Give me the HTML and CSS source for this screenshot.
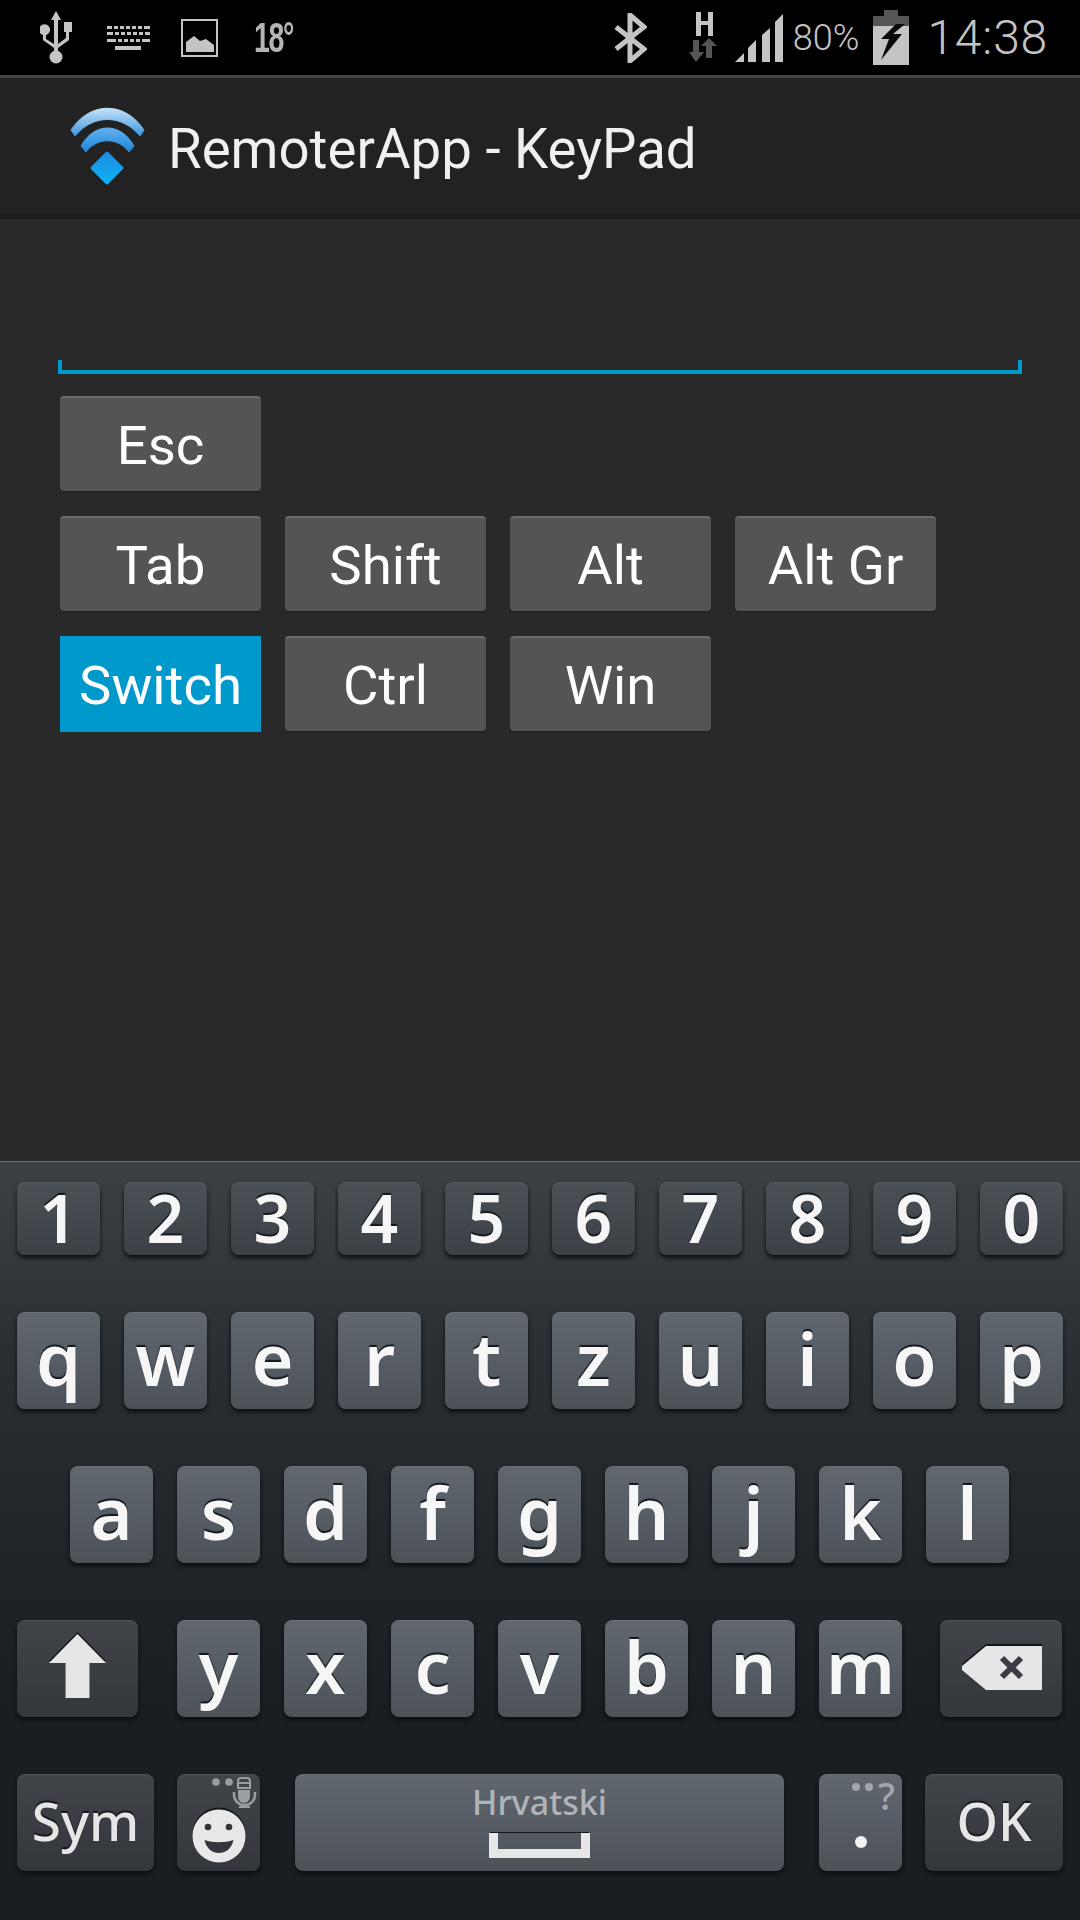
FILE: index.html
```html
<!DOCTYPE html>
<html lang="hr">
<head>
<meta charset="utf-8">
<title>RemoterApp - KeyPad</title>
<link rel="stylesheet" href="styles.css">
</head>
<body>
<div class="screen">
  <header class="status">
    <div class="status-left">
      <svg class="i-usb" viewBox="0 0 32 54"><path d="M16 0l5 9h-3v24l8-6v-6h-2V11h8v10h-3v8l-11 8v7h-4v-7L3 29v-5a5.5 5.5 0 1 1 3 0v4l8 5V9h-3z" fill="#c4c4c4"/><circle cx="16" cy="46" r="6.5" fill="#c4c4c4"/></svg>
      <svg class="i-kbd" viewBox="0 0 43 24" fill="#c4c4c4"><path d="M0 0h5v3H0zM7 0h4v3H7zM13 0h4v3h-4zM19 0h4v3h-4zM25 0h4v3h-4zM31 0h4v3h-4zM37 0h6v3h-6zM0 6h6v3H0zM8 6h4v3H8zM14 6h4v3h-4zM20 6h4v3h-4zM26 6h4v3h-4zM32 6h4v3h-4zM38 6h5v3h-5zM0 13h9v3H0zM11 13h4v3h-4zM17 13h4v3h-4zM23 13h4v3h-4zM29 13h4v3h-4zM35 13h8v3h-8zM8 20h26v4H8z"/></svg>
      <svg class="i-pic" viewBox="0 0 37 38"><rect x="1" y="1" width="35" height="36" fill="none" stroke="#c4c4c4" stroke-width="2"/><path d="M5 33V23l8-6 6 5 6-2 8 6v7z" fill="#c4c4c4"/></svg>
      <span class="temp">18°</span>
    </div>
    <div class="status-right">
      <svg class="i-bt" viewBox="0 0 33 50"><path d="M2 14l28 22-14 12V2l14 12L2 36" fill="none" stroke="#c4c4c4" stroke-width="5"/></svg>
      <svg class="i-net" viewBox="0 0 28 52"><path d="M7 0h5v9h7V0h5v24h-5V13h-7v11H7z" fill="#c4c4c4"/><path d="M17 41v-9h-5l8-8 8 8h-5v12h-6z" transform="translate(0 2)" fill="#555"/><path d="M4 28h6v12h5l-8 10-7-10h4z" fill="#555"/></svg>
      <svg class="i-sig" viewBox="0 0 48 48" fill="#c4c4c4"><path d="M0 48l9-9v9zM13 48V34l8-8v22zM27 48V21l8-7v34zM40 48V8l8-8v48z"/></svg>
      <span class="batt-text">80%</span>
      <svg class="i-bat" viewBox="0 0 36 55"><path d="M11 0h14v6h11v10H0V6h11z" fill="#555"/><path d="M0 16h36v39H0z" fill="#c4c4c4"/><path d="M23 14L8 29h8L8 50l21-26h-9l12-10z" fill="#0a0a0a"/></svg>
      <span class="clock">14:38</span>
    </div>
  </header>

  <div class="actionbar">
    <svg class="logo" viewBox="0 0 76 80">
      <defs>
        <linearGradient id="g1" x1="0" y1="0" x2="0" y2="1"><stop offset="0" stop-color="#c4e2f8"/><stop offset="1" stop-color="#3d97df"/></linearGradient>
        <linearGradient id="g2" x1="0" y1="0" x2="0" y2="1"><stop offset="0" stop-color="#62b0ec"/><stop offset="1" stop-color="#1d87dc"/></linearGradient>
        <linearGradient id="g3" x1="0" y1="0" x2="0" y2="1"><stop offset="0" stop-color="#1d8be0"/><stop offset="1" stop-color="#0eb2f6"/></linearGradient>
      </defs>
      <path d="M1 24C20-5 55-5 74 24l-4 6C52 8 23 8 5 30z" fill="url(#g1)" stroke="url(#g1)" stroke-width="1" stroke-linejoin="round"/>
      <path d="M11 40C24 16 51 16 64 40l-5 6C48 31 27 31 16 46z" fill="url(#g2)" stroke="url(#g2)" stroke-width="1" stroke-linejoin="round"/>
      <path d="M37 47l15 15-15 15-15-15z" fill="url(#g3)" stroke="url(#g3)" stroke-width="3" stroke-linejoin="round"/>
    </svg>
    <h1 class="title">RemoterApp - KeyPad</h1>
  </div>

  <main class="content">
    <div class="field"></div>
    <div class="btn-rows">
      <div class="btn-row"><button class="btn">Esc</button></div>
      <div class="btn-row"><button class="btn">Tab</button><button class="btn">Shift</button><button class="btn">Alt</button><button class="btn">Alt Gr</button></div>
      <div class="btn-row"><button class="btn btn-on">Switch</button><button class="btn">Ctrl</button><button class="btn">Win</button></div>
    </div>
  </main>

  <section class="keyboard">
    <div class="kb-row">
      <div class="key key-num">1</div><div class="key key-num">2</div><div class="key key-num">3</div><div class="key key-num">4</div><div class="key key-num">5</div><div class="key key-num">6</div><div class="key key-num">7</div><div class="key key-num">8</div><div class="key key-num">9</div><div class="key key-num">0</div>
    </div>
    <div class="kb-row">
      <div class="key">q</div><div class="key">w</div><div class="key">e</div><div class="key">r</div><div class="key">t</div><div class="key">z</div><div class="key">u</div><div class="key">i</div><div class="key">o</div><div class="key">p</div>
    </div>
    <div class="kb-row kb-row-home">
      <div class="key">a</div><div class="key">s</div><div class="key">d</div><div class="key">f</div><div class="key">g</div><div class="key">h</div><div class="key">j</div><div class="key">k</div><div class="key">l</div>
    </div>
    <div class="kb-row">
      <div class="key key-fn key-shift"><svg class="i-shift" viewBox="0 0 57 64"><path d="M28.500 0L57 29H40.500v35h-24V29H0z" fill="#e6e6e6"/></svg></div>
      <div class="key">y</div><div class="key">x</div><div class="key">c</div><div class="key">v</div><div class="key">b</div><div class="key">n</div><div class="key">m</div>
      <div class="key key-fn key-back"><svg class="i-back" viewBox="0 0 80 46"><path d="M24 1h56v44H24L0 25v-4z" fill="#e6e6e6"/><path d="M40 13l19 19M59 13L40 32" stroke="#3a3e44" stroke-width="6" fill="none"/></svg></div>
    </div>
    <div class="kb-row">
      <div class="key key-fn key-sym">Sym</div>
      <div class="key key-fn key-emoji">
        <svg class="i-emoji" viewBox="0 0 84 97">
          <circle cx="39" cy="8" r="3.800" fill="#9a9da1"/><circle cx="52" cy="8" r="3.800" fill="#9a9da1"/>
          <path d="M61 7a3 3 0 0 1 3-3h6a3 3 0 0 1 3 3v7H61z" fill="none" stroke="#9a9da1" stroke-width="2"/>
          <path d="M62 9h10" stroke="#9a9da1" stroke-width="2"/>
          <path d="M61 16h12v7a6 6 0 0 1-12 0z" fill="#9a9da1"/>
          <path d="M57 18v3a10.500 10 0 0 0 21 0v-3" fill="none" stroke="#9a9da1" stroke-width="2.500"/>
          <path d="M62 33h11" stroke="#9a9da1" stroke-width="2"/>
          <circle cx="42" cy="60" r="26.500" fill="#15181b"/>
          <circle cx="42" cy="62" r="26.500" fill="#e8e8e8"/>
          <circle cx="31" cy="53" r="3.300" fill="#33373c"/><circle cx="52" cy="53" r="3.300" fill="#33373c"/>
          <path d="M27.500 66c9 3 20 3 29 0-2 9-8 13-14.500 13s-12.500-4-14.500-13z" fill="#33373c"/>
        </svg>
      </div>
      <div class="key key-space">
        <span class="lang">Hrvatski</span>
        <span class="space-bar"></span>
      </div>
      <div class="key key-dot">
        <span class="dot-alt"><i class="dotlet"></i><i class="dotlet"></i><b class="qmark">?</b></span>
        <span class="dot"></span>
      </div>
      <div class="key key-fn key-ok">OK</div>
    </div>
  </section>
</div>
</body>
</html>
```
FILE: styles.css
```css
* { box-sizing: border-box; }
html, body { margin: 0; padding: 0; background: #292929; }
.screen { width: 1080px; height: 1920px; display: flex; flex-direction: column; overflow: hidden; font-family: Roboto, sans-serif; }

.status { height: 78px; flex: none; background: #000; border-bottom: 3px solid #444; display: flex; justify-content: space-between; align-items: center; color: #c4c4c4; padding: 0 32px 0 40px; }
.status-left, .status-right { display: flex; align-items: center; }
.i-usb { width: 32px; height: 54px; margin-right: 35px; }
.i-kbd { width: 43px; height: 24px; margin-right: 31px; }
.i-pic { width: 37px; height: 38px; margin-right: 36px; }
.temp { display: inline-block; width: 36px; font-family: "Liberation Sans", sans-serif; font-weight: 700; font-size: 42px; letter-spacing: -2px; color: #b4b4b4; transform: scaleX(.68); transform-origin: left center; white-space: nowrap; }
.i-bt { width: 33px; height: 50px; margin-right: 42px; }
.i-net { width: 28px; height: 52px; margin-right: 18px; }
.i-sig { width: 48px; height: 48px; margin-right: 10px; }
.batt-text { font-weight: 300; font-size: 36px; margin-right: 14px; }
.i-bat { width: 36px; height: 55px; margin-right: 18px; }
.clock { font-weight: 300; font-size: 48px; letter-spacing: .8px; }

.actionbar { height: 141px; flex: none; background: #222; border-bottom: 6px solid #1d1d1d; display: flex; align-items: center; padding-left: 70px; }
.logo { width: 76px; height: 80px; margin-right: 22px; }
.title { margin: 6px 0 0; font-weight: 400; font-size: 54.600px; color: #f0f0f0; }

.content { flex: 1; background: #292929; padding: 141px 0 0 58px; }
.field { width: 964px; height: 14px; border: solid #0099cc; border-width: 0 4px 4px; }
.btn-rows { margin-top: 22px; padding-left: 2px; display: flex; flex-direction: column; gap: 25px; }
.btn-row { display: flex; gap: 24px; }
.btn { width: 201px; height: 95px; padding: 1px 0 0; border: 0; border-top: 2px solid #6a6a6a; border-radius: 4px; background: #545454; box-shadow: 0 1px 1px #1f1f1f; color: #fff; font-family: Roboto, sans-serif; font-size: 54.500px; }
.btn-on { background: #0099cc; border-top: 0; border-radius: 0; height: 96px; box-shadow: none; }

.keyboard { height: 759px; flex: none; border-top: 1px solid #6d7174; background: linear-gradient(#3d4145 0, #2a2e33 200px, #1f2429 400px, #191e23 560px); padding: 20px 17px 0; display: flex; flex-direction: column; gap: 57px; }
.kb-row { display: flex; gap: 24px; font-family: "Noto Sans", sans-serif; }
.kb-row-home { padding-left: 53px; }
.key { width: 83px; height: 97px; flex: none; display: flex; align-items: center; justify-content: center; position: relative; border-radius: 8px; background: linear-gradient(#60676f, #4d5259); box-shadow: 0 3px 4px #0b0e11, inset 0 1px 0 rgba(255,255,255,.07); color: #f6f6f6; font-size: 72px; font-weight: 600; line-height: 1; text-shadow: 0 -2px 1px #14171a; padding-bottom: 6px; }
.key-num { height: 73px; font-size: 66px; padding-bottom: 4px; background: linear-gradient(#4b5057, #3c4046); }
.key-fn { background: linear-gradient(#41454a, #33363b); color: #e6e6e6; font-weight: 500; }

.key-shift { width: 121px; margin-right: 15px; padding-bottom: 5px; }
.i-shift { width: 57px; height: 64px; filter: drop-shadow(0 -2px 0 #14171a); }
.key-back { width: 122px; margin-left: 14px; padding-bottom: 0; }
.i-back { width: 80px; height: 46px; margin-top: -2px; margin-left: 2px; filter: drop-shadow(0 -2px 0 #14171a); }
.key-sym { width: 137px; margin-right: -1px; font-size: 53px; padding-bottom: 5px; }
.key-emoji { width: 83px; margin-right: 11px; padding-bottom: 0; }
.i-emoji { width: 84px; height: 97px; flex: none; }
.key-space { width: 489px; margin-right: 11px; flex-direction: column; justify-content: flex-start; padding-bottom: 0; }
.lang { font-size: 34px; line-height: 32px; margin-top: 12px; color: #b0b4b8; text-shadow: none; font-weight: 500; }
.space-bar { width: 101px; height: 25px; margin-top: 15px; border: solid #e6e6e6; border-width: 0 9px 9px; box-shadow: 0 -2px 0 -1px #14171a; }
.key-dot { width: 83px; margin-right: -1px; padding-bottom: 0; }
.dot { width: 12px; height: 12px; border-radius: 50%; background: #f2f2f2; margin-top: 39px; }
.dot-alt { position: absolute; top: 4px; right: 7px; display: flex; align-items: flex-start; gap: 5px; text-shadow: none; color: #a2a6aa; }
.dotlet { display: block; width: 8px; height: 8px; margin-top: 5px; border-radius: 50%; background: #a2a6aa; }
.qmark { font-size: 38px; line-height: 34px; font-weight: 500; }
.key-ok { width: 138px; font-size: 53px; padding-bottom: 5px; }
```
